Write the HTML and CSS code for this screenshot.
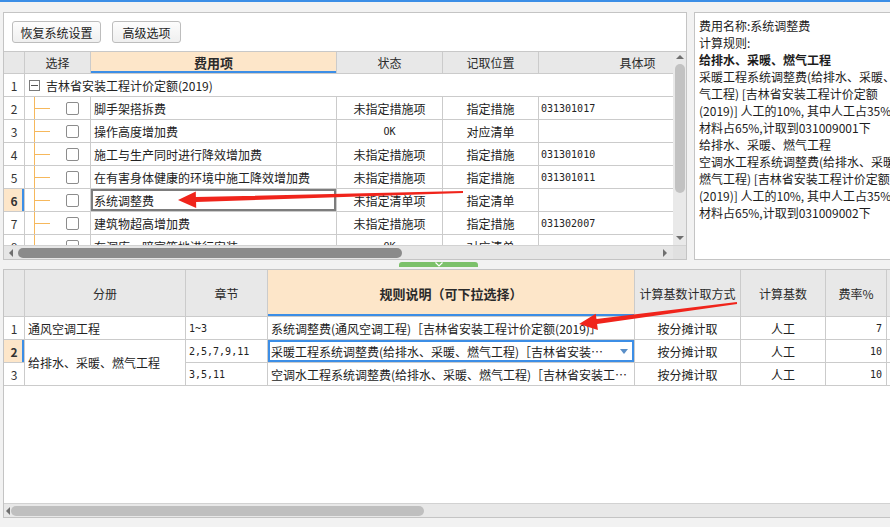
FILE: index.html
```html
<!DOCTYPE html>
<html lang="zh">
<head>
<meta charset="utf-8">
<title>费用设置</title>
<link rel="stylesheet" href="styles.css">
</head>
<body>
<div class="titlebar"></div>

<div class="top">
  <div class="left-panel">
    <div class="toolbar">
      <button class="btn btn-a">恢复系统设置</button>
      <button class="btn btn-b">高级选项</button>
    </div>
    <div class="grid-area">
      <div class="grid-clip">
        <div class="tgrid">
          <div class="c h"></div><div class="c h">选择</div><div class="c h hl">费用项</div><div class="c h">状态</div><div class="c h">记取位置</div><div class="c h">具体项</div>

          <div class="c num">1</div><div class="c span1"><span class="minus"></span><span>吉林省安装工程计价定额(2019)</span></div>

          <div class="c num">2</div><div class="c tree"><span class="cb"></span></div><div class="c t">脚手架搭拆费</div><div class="c ctr">未指定措施项</div><div class="c ctr">指定措施</div><div class="c code mono">031301017</div>

          <div class="c num">3</div><div class="c tree"><span class="cb"></span></div><div class="c t">操作高度增加费</div><div class="c ctr mono">OK</div><div class="c ctr">对应清单</div><div class="c code"></div>

          <div class="c num">4</div><div class="c tree"><span class="cb"></span></div><div class="c t">施工与生产同时进行降效增加费</div><div class="c ctr">未指定措施项</div><div class="c ctr">指定措施</div><div class="c code mono">031301010</div>

          <div class="c num">5</div><div class="c tree"><span class="cb"></span></div><div class="c t">在有害身体健康的环境中施工降效增加费</div><div class="c ctr">未指定措施项</div><div class="c ctr">指定措施</div><div class="c code mono">031301011</div>

          <div class="c num cur">6</div><div class="c tree"><span class="cb"></span></div><div class="c t sel">系统调整费</div><div class="c ctr">未指定清单项</div><div class="c ctr">指定清单</div><div class="c code"></div>

          <div class="c num">7</div><div class="c tree"><span class="cb"></span></div><div class="c t">建筑物超高增加费</div><div class="c ctr">未指定措施项</div><div class="c ctr">指定措施</div><div class="c code mono">031302007</div>

          <div class="c num">8</div><div class="c tree"><span class="cb"></span></div><div class="c t">在洞库、暗室等地进行安装</div><div class="c ctr mono">OK</div><div class="c ctr">对应清单</div><div class="c code"></div>
        </div>
      </div>
      <div class="vscroll">
        <span class="tri-up"></span>
        <span class="vthumb"></span>
        <span class="vspace"></span>
        <span class="tri-down"></span>
      </div>
    </div>
    <div class="hscroll">
      <span class="hs-left"><span class="tri-left"></span></span>
      <span class="hs-thumb"></span>
      <span class="hs-space"></span>
      <span class="hs-right"><span class="tri-right"></span></span>
      <span class="hs-corner"></span>
    </div>
  </div>

  <div class="info">
    <div>费用名称:系统调整费</div>
    <div>计算规则:</div>
    <div class="b">给排水、采暖、燃气工程</div>
    <div>采暖工程系统调整费(给排水、采暖、燃</div>
    <div>气工程) [吉林省安装工程计价定额</div>
    <div>(2019)] 人工的10%, 其中人工占35%</div>
    <div>材料占65%,计取到031009001下</div>
    <div>给排水、采暖、燃气工程</div>
    <div>空调水工程系统调整费(给排水、采暖、</div>
    <div>燃气工程) [吉林省安装工程计价定额</div>
    <div>(2019)] 人工的10%, 其中人工占35%</div>
    <div>材料占65%,计取到031009002下</div>
  </div>
</div>

<div class="splitter">
  <div class="handle">
    <svg width="10" height="5" viewBox="0 0 10 5"><path d="M1.5 0.5 L5 4 L8.5 0.5" fill="none" stroke="#ffffff" stroke-width="1.2"/></svg>
  </div>
</div>

<div class="bottom">
  <div class="bgrid">
    <div class="c h"></div><div class="c h">分册</div><div class="c h">章节</div><div class="c h hl">规则说明（可下拉选择）</div><div class="c h">计算基数计取方式</div><div class="c h">计算基数</div><div class="c h">费率%</div><div class="c h"></div>

    <div class="c num">1</div><div class="c t">通风空调工程</div><div class="c t mono">1~3</div><div class="c t">系统调整费(通风空调工程)［吉林省安装工程计价定额(2019)］</div><div class="c ctr">按分摊计取</div><div class="c ctr">人工</div><div class="c r mono">7</div><div class="c"></div>

    <div class="c num cur">2</div><div class="c t rows2">给排水、采暖、燃气工程</div><div class="c t mono">2,5,7,9,11</div><div class="c t drop"><span class="dtext">采暖工程系统调整费(给排水、采暖、燃气工程)［吉林省安装…</span><span class="tri-drop"></span></div><div class="c ctr">按分摊计取</div><div class="c ctr">人工</div><div class="c r mono">10</div><div class="c"></div>

    <div class="c num">3</div><div class="c t mono">3,5,11</div><div class="c t">空调水工程系统调整费(给排水、采暖、燃气工程)［吉林省安装工…</div><div class="c ctr">按分摊计取</div><div class="c ctr">人工</div><div class="c r mono">10</div><div class="c"></div>
  </div>
  <div class="bfill"></div>
  <div class="bscroll">
    <span class="bs-left"><span class="tri-left"></span></span>
    <span class="bs-thumb"></span>
  </div>
</div>

<svg class="arrows" width="890" height="527" viewBox="0 0 890 527">
  <polygon points="178,200 195.8,191.5 195.9,197 463,191 463,193 196.1,202 196.2,208" fill="#f0241b"/>
  <polygon points="579,324 595.7,313.7 596.5,319.1 736.9,302 737.1,304 597.1,324.1 597.9,330" fill="#f0241b"/>
</svg>
</body>
</html>
```

FILE: styles.css
```css
html, body {
  margin: 0;
  padding: 0;
}
body {
  background: #f2f2f2;
  font: 12px "Noto Sans CJK SC", "Noto Sans", sans-serif;
  color: #222;
  width: 890px;
  height: 527px;
  overflow: hidden;
  position: relative;
}

.titlebar {
  height: 2px;
  background: #3c8ee6;
}

.top {
  display: flex;
  gap: 7px;
  margin-top: 10px;
  padding-left: 3px;
  height: 248px;
  width: 930px;
}

.left-panel {
  flex: none;
  width: 684px;
  box-sizing: border-box;
  border: 1px solid #c4c4c4;
  background: #fff;
  display: flex;
  flex-direction: column;
}

.toolbar {
  height: 38px;
  box-sizing: border-box;
  padding: 8px 0 0 8px;
  display: flex;
  gap: 11px;
  align-items: flex-start;
}

.btn {
  height: 22px;
  box-sizing: border-box;
  border: 1px solid #bdbdbd;
  border-radius: 3px;
  background: linear-gradient(#fdfdfd, #efefef);
  font: 12px "Noto Sans CJK SC", sans-serif;
  color: #222;
  padding: 0;
  display: flex;
  align-items: center;
  justify-content: center;
}
.btn-a { width: 89px; }
.btn-b { width: 69px; }

.grid-area {
  height: 194px;
  box-sizing: border-box;
  border-top: 1px solid #c8c8c8;
  display: flex;
}
.grid-clip {
  width: 669px;
  height: 193px;
  overflow: hidden;
}

.tgrid {
  display: grid;
  grid-template-columns: 21px 66px 246px 106px 96px 198px;
  grid-template-rows: 22px;
  grid-auto-rows: 23px;
  width: 733px;
}

.c {
  border-right: 1px solid #cbcbcb;
  border-bottom: 1px solid #cbcbcb;
  box-sizing: border-box;
  display: flex;
  align-items: center;
  white-space: nowrap;
  overflow: hidden;
  min-width: 0;
}
.h {
  background: #e8e8e8;
  justify-content: center;
  color: #2a2a2a;
}
.h.hl {
  background: #fde6c9;
  font-weight: bold;
  font-size: 13px;
  box-shadow: inset 0 -2px #3c8ee6;
}
.num {
  justify-content: center;
  color: #333;
}
.num.cur {
  background: #fde6c9;
  font-weight: bold;
  box-shadow: inset -2px 0 #3c8ee6;
}
.t { padding-left: 3px; }
.ctr { justify-content: center; }
.r { justify-content: flex-end; padding-right: 4px; }
.code { padding-left: 2px; }
.mono {
  font-family: "DejaVu Sans Mono", "Liberation Mono", monospace;
  font-size: 10px;
}
.sel { box-shadow: inset 0 0 0 2px #7d7d7d; }

.span1 {
  grid-column: 2 / 7;
  padding-left: 4px;
}
.minus {
  width: 11px;
  height: 11px;
  box-sizing: border-box;
  border: 1px solid #7a7a7a;
  background: linear-gradient(#555, #555) center / 7px 1px no-repeat, #fff;
  margin-right: 6px;
  flex: none;
}

.tree {
  background:
    linear-gradient(#f6b85c, #f6b85c) 9px 0 / 1px 100% no-repeat,
    linear-gradient(#f6b85c, #f6b85c) 10px 50% / 15px 1px no-repeat;
}
.cb {
  width: 13px;
  height: 13px;
  box-sizing: border-box;
  border: 1px solid #8c8c8c;
  border-radius: 2px;
  background: #fff;
  margin-left: 41px;
}

.vscroll {
  width: 13px;
  background: #e9e9e9;
  display: flex;
  flex-direction: column;
  align-items: center;
}
.tri-up {
  margin-top: 3px;
  width: 0;
  height: 0;
  border-left: 4px solid transparent;
  border-right: 4px solid transparent;
  border-bottom: 4px solid #6f6f6f;
}
.vthumb {
  margin-top: 5px;
  width: 10px;
  height: 129px;
  border-radius: 5px;
  background: #c2c2c2;
}
.vspace { flex: 1; }
.tri-down {
  margin-bottom: 5px;
  width: 0;
  height: 0;
  border-left: 4px solid transparent;
  border-right: 4px solid transparent;
  border-top: 4px solid #6f6f6f;
}

.hscroll {
  height: 14px;
  box-sizing: border-box;
  border-top: 1px solid #d2d2d2;
  background: #e6e6e6;
  display: flex;
  align-items: center;
}
.hs-left {
  width: 14px;
  display: flex;
  justify-content: center;
}
.tri-left {
  width: 0;
  height: 0;
  border-top: 4px solid transparent;
  border-bottom: 4px solid transparent;
  border-right: 4px solid #6f6f6f;
}
.tri-right {
  width: 0;
  height: 0;
  border-top: 4px solid transparent;
  border-bottom: 4px solid transparent;
  border-left: 4px solid #6f6f6f;
}
.hs-thumb {
  width: 384px;
  height: 10px;
  border-radius: 5px;
  background: #8b8b8b;
}
.hs-space { flex: 1; }
.hs-right {
  width: 17px;
  display: flex;
  justify-content: center;
}
.hs-corner {
  width: 13px;
  align-self: stretch;
  background: #e0e0e0;
}

.info {
  flex: 1;
  box-sizing: border-box;
  border: 1px solid #c4c4c4;
  background: #fff;
  padding: 4px 0 0 4px;
  line-height: 17px;
  font-size: 12px;
  color: #1c1c1c;
  white-space: nowrap;
  overflow: hidden;
}
.info .b { font-weight: bold; }

.splitter {
  height: 9px;
  box-sizing: border-box;
  padding: 2px 0 0 399px;
  display: flex;
  align-items: flex-start;
}
.handle {
  width: 79px;
  height: 5px;
  background: #7cc16a;
  border-radius: 3px 3px 0 0;
  display: flex;
  justify-content: center;
}

.bottom {
  margin-left: 3px;
  width: 920px;
  height: 249px;
  box-sizing: border-box;
  border: 1px solid #c4c4c4;
  background: #fff;
  display: flex;
  flex-direction: column;
}
.bgrid {
  display: grid;
  grid-template-columns: 21px 161px 82px 367px 106px 85px 61px 100px;
  grid-template-rows: 47px repeat(3, 23px);
}
.rows2 { grid-row: span 2; }
.drop {
  box-shadow: inset 0 0 0 2px #3c8ee6;
  justify-content: space-between;
  padding-right: 6px;
}
.dtext { overflow: hidden; }
.tri-drop {
  flex: none;
  width: 0;
  height: 0;
  border-left: 4px solid transparent;
  border-right: 4px solid transparent;
  border-top: 5px solid #5a8fc8;
}
.bfill { flex: 1; }
.bscroll {
  height: 14px;
  box-sizing: border-box;
  border-top: 1px solid #d2d2d2;
  background: #e8e8e8;
  display: flex;
  align-items: center;
}
.bs-left {
  width: 7px;
  display: flex;
  justify-content: center;
}
.bs-thumb {
  width: 413px;
  height: 10px;
  border-radius: 5px;
  background: #bfbfbf;
}

.arrows {
  position: absolute;
  left: 0;
  top: 0;
  pointer-events: none;
}
```
